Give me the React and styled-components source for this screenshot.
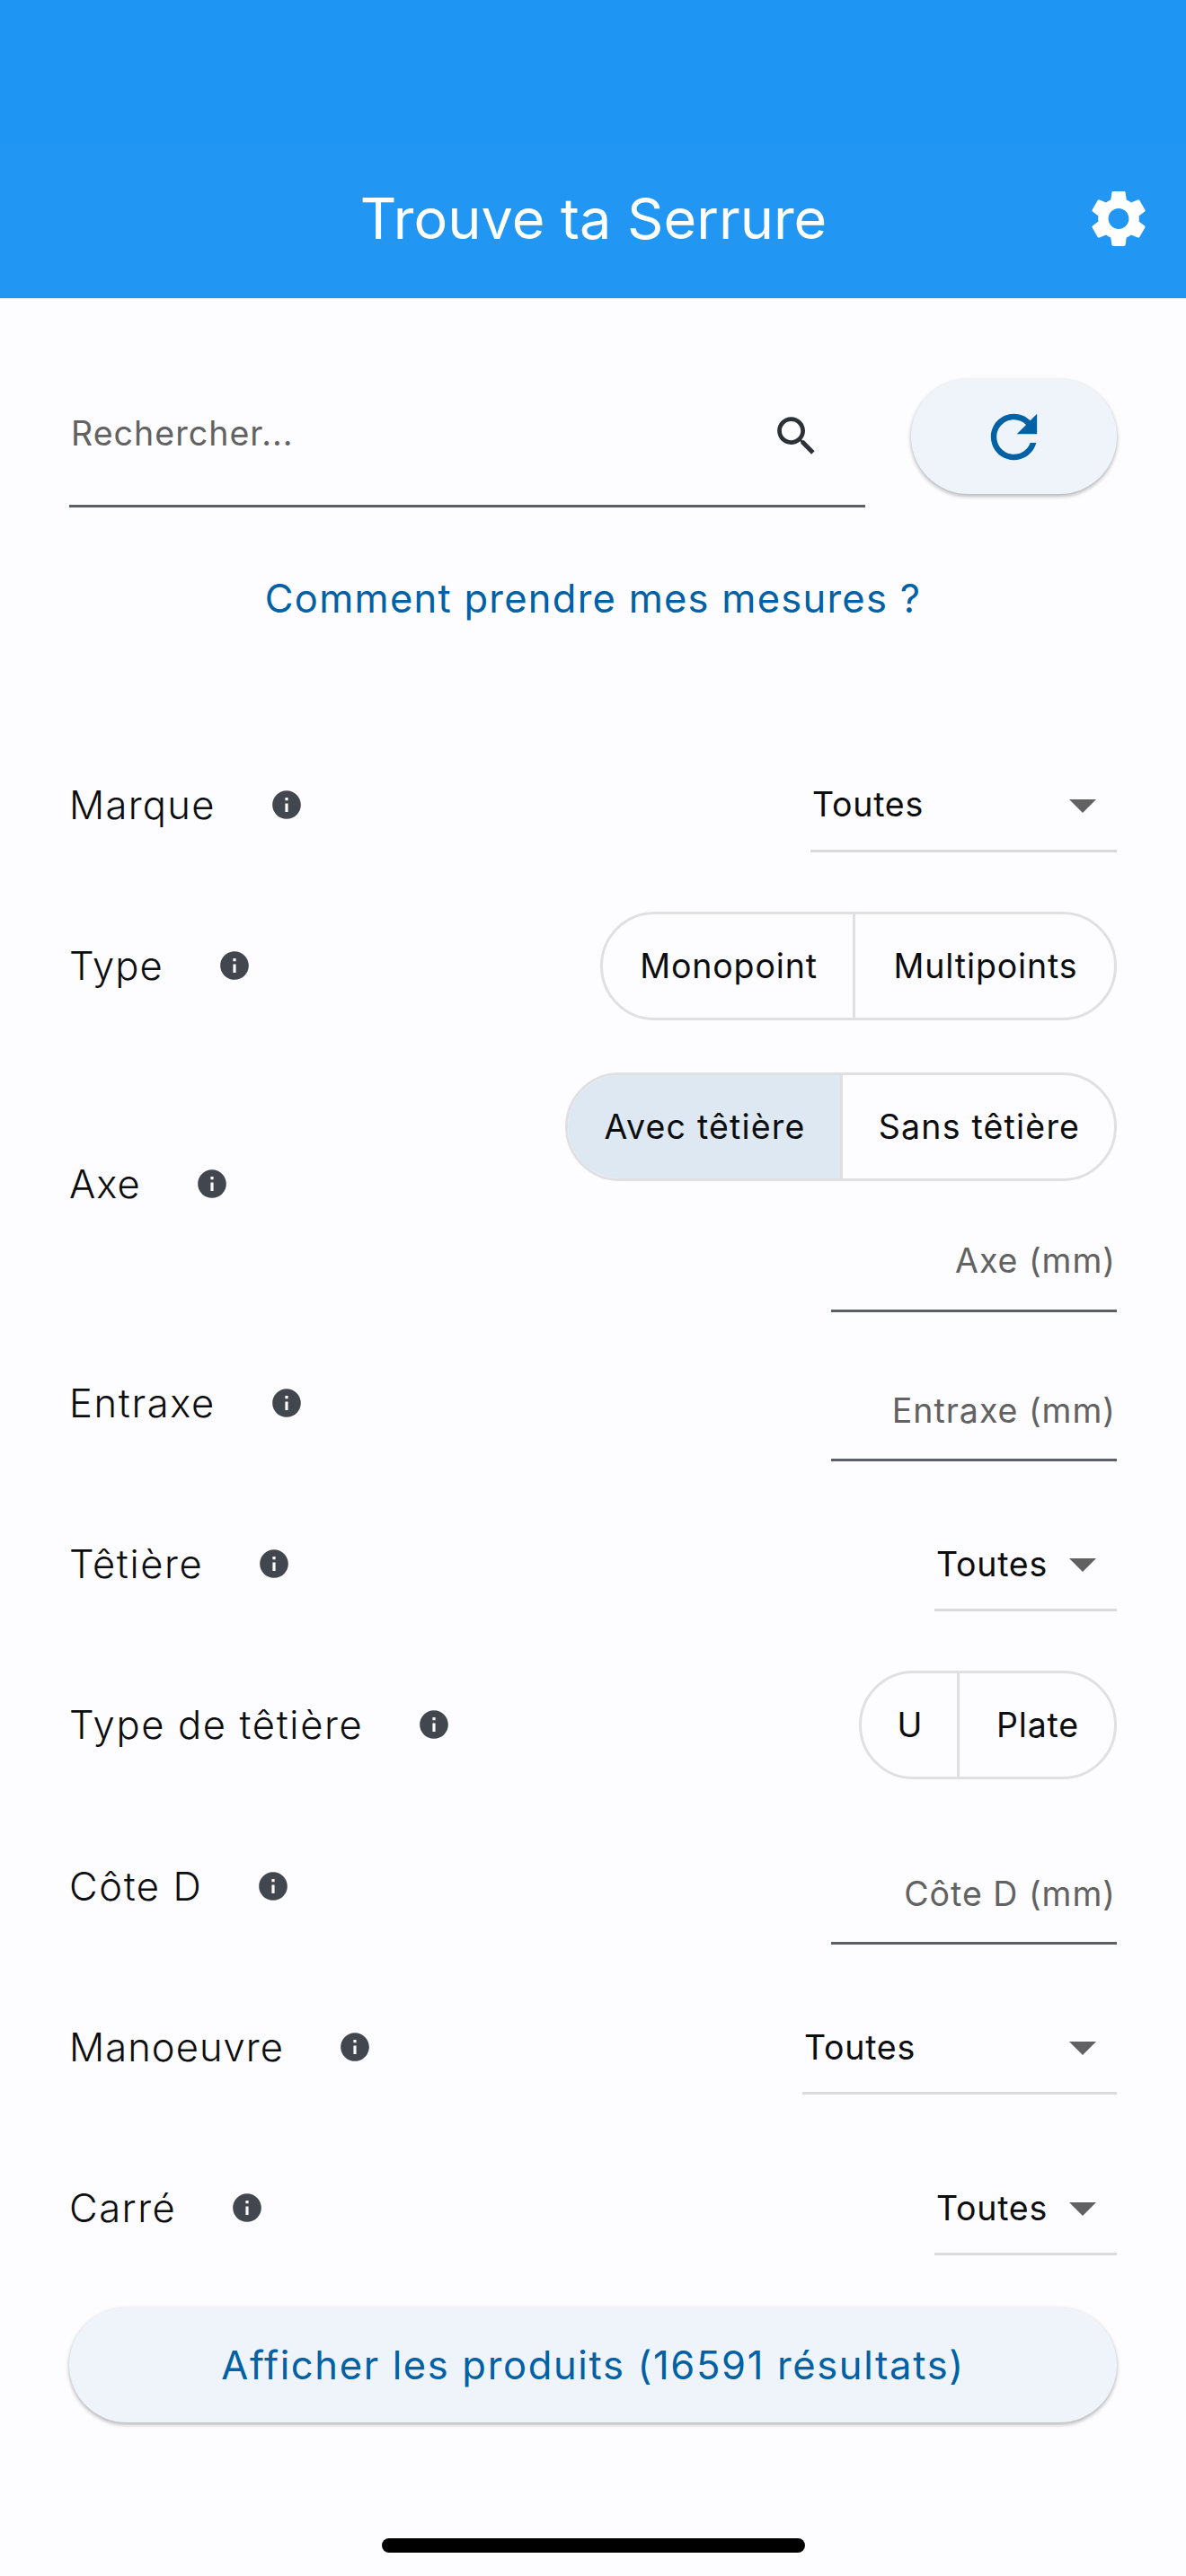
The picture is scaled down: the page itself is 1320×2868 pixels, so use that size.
import React from 'react';
import styled, { createGlobalStyle } from 'styled-components';

const GlobalStyle = createGlobalStyle`
    * {
        box-sizing: border-box;
    }

    body {
        margin: 0;
        background-color: #fdfcff;
        color: #1a1c1e;
        font-family: 'Inter', 'Liberation Sans', sans-serif;
    }

    button, input {
        font-family: inherit;
        margin: 0;
    }
`

const Screen = styled.div`
    width: 1320px;
    height: 2868px;
    display: flex;
    flex-direction: column;
    background-color: #fdfcff;
    overflow: hidden;
`

const StatusBar = styled.div`
    height: 160px;
    flex-shrink: 0;
    background-color: #1e95f2;
`

const Header = styled.header`
    height: 172px;
    flex-shrink: 0;
    padding: 0 37px 6px 113px;
    display: grid;
    grid-template-columns: 1fr 76px;
    align-items: center;
    background-color: #2196f3;
`

const HeaderTitle = styled.h1`
    margin: 0;
    padding-left: 1px;
    font-size: 63px;
    font-weight: 400;
    line-height: 80px;
    letter-spacing: 0;
    text-align: center;
    color: white;
`

const IconButton = styled.button`
    display: flex;
    padding: 0;
    border: none;
    background: none;
    color: ${props => props.$color};
`

const Content = styled.main`
    padding: 0 77px;
    display: flex;
    flex-direction: column;
`

const SearchRow = styled.div`
    margin-top: 76px;
    height: 157px;
    display: flex;
    justify-content: space-between;
`

const SearchField = styled.label`
    width: 886px;
    padding: 0 48px 6px 2px;
    display: flex;
    align-items: center;
    border-bottom: 3px solid #5a5f68;

    ${IconButton} {
        padding-top: 6px;
    }
`

const SearchInput = styled.input`
    flex: 1;
    min-width: 0;
    padding: 0;
    border: none;
    outline: none;
    background: none;
    font-size: 37.5px;
    letter-spacing: 1.05px;

    &::placeholder {
        color: #626262;
        opacity: 1;
    }
`

const RaisedButton = styled.button`
    height: 128px;
    padding: 0;
    display: flex;
    align-items: center;
    justify-content: center;
    border: none;
    border-radius: 64px;
    background-color: #eff4fb;
    color: #0061a4;
    box-shadow: 0 3px 4px rgba(0, 0, 0, 0.2), 0 1px 5px rgba(0, 0, 0, 0.12);
`

const RefreshButton = styled(RaisedButton)`
    width: 229px;
    margin-top: 14px;
`

const HelpLink = styled.button`
    height: 48px;
    margin: 77px 0 116px;
    padding: 0;
    border: none;
    background: none;
    font-size: 43.5px;
    line-height: 48px;
    letter-spacing: 1.25px;
    color: #0061a4;
`

const FilterRow = styled.div`
    height: ${props => props.$height || 179.35}px;
    display: flex;
    align-items: center;
    justify-content: space-between;
`

const FilterLabel = styled.div`
    display: flex;
    align-items: center;
    gap: 60px;
    font-size: 43.5px;
    font-weight: 300;
    letter-spacing: ${props => props.$tracking}px;
    color: #0c0d0f;
`

const Stack = styled.div`
    margin-top: 18px;
    display: flex;
    flex-direction: column;
    align-items: flex-end;
    gap: 15px;
`

const Dropdown = styled.div`
    width: ${props => props.$width}px;
    height: 106px;
    padding: 3px 2px 0 2px;
    display: flex;
    align-items: center;
    justify-content: space-between;
    border-bottom: 3px solid #dadadc;
    font-size: 37.5px;
    letter-spacing: 0.75px;
    color: #0c0d0f;

    ${IconButton} {
        margin-left: -12px;
    }
`

const Segments = styled.div`
    height: 121px;
    display: flex;
    border: 3px solid #e0e0e2;
    border-radius: 61px;
    overflow: hidden;
    letter-spacing: ${props => props.$tracking || 0.85}px;
`

const Segment = styled.button`
    width: ${props => props.$width}px;
    padding: 0 0 0 2px;
    border: none;
    background-color: ${props => props.$selected ? '#dde8f3' : 'transparent'};
    font-size: 37.5px;
    letter-spacing: inherit;
    color: #0c0d0f;

    & + & {
        border-left: 3px solid #e0e0e2;
    }
`

const NumberInput = styled.input`
    width: 318px;
    height: 120px;
    margin-top: 11px;
    padding: 9px 1px 0 0;
    border: none;
    border-bottom: 3px solid #5a5f68;
    outline: none;
    background: none;
    text-align: right;
    font-size: 37.5px;
    letter-spacing: 1px;

    &::placeholder {
        color: #626262;
        opacity: 1;
    }
`

const ResultsButton = styled(RaisedButton)`
    margin-top: 21px;
    font-size: 43.5px;
    letter-spacing: 1.65px;
`

const HomeIndicator = styled.div`
    width: 471px;
    height: 16px;
    margin: auto auto 26px;
    flex-shrink: 0;
    border-radius: 8px;
    background-color: black;
`

function Icon({ size, path }) {
    return (
        <svg width={size} height={size} viewBox="0 0 24 24" fill="currentColor">
            <path d={path} />
        </svg>
    )
}

const GEAR = 'M19.14 12.94c.04-.3.06-.61.06-.94 0-.32-.02-.64-.07-.94l2.03-1.58c.18-.14.23-.41.12-.61l-1.92-3.32c-.12-.22-.37-.29-.59-.22l-2.39.96c-.5-.38-1.03-.7-1.62-.94l-.36-2.54c-.04-.24-.24-.41-.48-.41h-3.84c-.24 0-.43.17-.47.41l-.36 2.54c-.59.24-1.13.57-1.62.94l-2.39-.96c-.22-.08-.47 0-.59.22L2.74 8.87c-.12.21-.08.47.12.61l2.03 1.58c-.05.3-.09.63-.09.94s.02.64.07.94l-2.03 1.58c-.18.14-.23.41-.12.61l1.92 3.32c.12.22.37.29.59.22l2.39-.96c.5.38 1.03.7 1.62.94l.36 2.54c.05.24.24.41.48.41h3.84c.24 0 .44-.17.47-.41l.36-2.54c.59-.24 1.13-.56 1.62-.94l2.39.96c.22.08.47 0 .59-.22l1.92-3.32c.12-.22.07-.47-.12-.61l-2.01-1.58zM12 15.6c-1.98 0-3.6-1.62-3.6-3.6s1.62-3.6 3.6-3.6 3.6 1.62 3.6 3.6-1.62 3.6-3.6 3.6z'
const SEARCH = 'M15.5 14h-.79l-.28-.27C15.41 12.59 16 11.11 16 9.5 16 5.91 13.09 3 9.5 3S3 5.91 3 9.5 5.91 16 9.5 16c1.61 0 3.09-.59 4.23-1.57l.27.28v.79l5 4.99L20.49 19l-4.99-5zm-6 0C7.01 14 5 11.99 5 9.5S7.01 5 9.5 5 14 7.01 14 9.5 11.99 14 9.5 14z'
const REFRESH = 'M17.65 6.35C16.2 4.9 14.21 4 12 4c-4.42 0-7.99 3.58-7.99 8s3.57 8 7.99 8c3.73 0 6.84-2.55 7.73-6h-2.08c-.82 2.33-3.04 4-5.65 4-3.31 0-6-2.69-6-6s2.69-6 6-6c1.66 0 3.14.69 4.22 1.78L13 11h7V4l-2.35 2.35z'
const INFO = 'M12 2C6.48 2 2 6.48 2 12s4.48 10 10 10 10-4.48 10-10S17.52 2 12 2zm1 15h-2v-6h2v6zm0-8h-2V7h2v2z'
const ARROW = 'M7 10l5 5 5-5z'

function Filter({ label, height, tracking = 1.5, children }) {
    return (
        <FilterRow $height={height}>
            <FilterLabel $tracking={tracking}>
                {label}
                <IconButton $color="#42474f">
                    <Icon size={38} path={INFO} />
                </IconButton>
            </FilterLabel>
            {children}
        </FilterRow>
    )
}

function Select({ width }) {
    return (
        <Dropdown $width={width}>
            Toutes
            <IconButton $color="#616161">
                <Icon size={72} path={ARROW} />
            </IconButton>
        </Dropdown>
    )
}

export default function App() {
    return (
        <Screen>
            <GlobalStyle />
            <StatusBar />
            <Header>
                <HeaderTitle>Trouve ta Serrure</HeaderTitle>
                <IconButton $color="white">
                    <Icon size={77} path={GEAR} />
                </IconButton>
            </Header>
            <Content>
                <SearchRow>
                    <SearchField>
                        <SearchInput placeholder="Rechercher..." />
                        <IconButton as="span" $color="#2c3138">
                            <Icon size={57} path={SEARCH} />
                        </IconButton>
                    </SearchField>
                    <RefreshButton>
                        <Icon size={77} path={REFRESH} />
                    </RefreshButton>
                </SearchRow>
                <HelpLink>Comment prendre mes mesures ?</HelpLink>
                <Filter label="Marque" tracking={1.3}>
                    <Select width={341} />
                </Filter>
                <Filter label="Type" tracking={1.1}>
                    <Segments>
                        <Segment $width={278}>Monopoint</Segment>
                        <Segment $width={291}>Multipoints</Segment>
                    </Segments>
                </Filter>
                <Filter label="Axe" height={307.3} tracking={1}>
                    <Stack>
                        <Segments $tracking={1.2}>
                            <Segment $width={303} $selected>Avec têtière</Segment>
                            <Segment $width={305}>Sans têtière</Segment>
                        </Segments>
                        <NumberInput placeholder="Axe (mm)" />
                    </Stack>
                </Filter>
                <Filter label="Entraxe" tracking={1.65}>
                    <NumberInput placeholder="Entraxe (mm)" />
                </Filter>
                <Filter label="Têtière" tracking={1.65}>
                    <Select width={203} />
                </Filter>
                <Filter label="Type de têtière" tracking={1.65}>
                    <Segments>
                        <Segment $width={106}>U</Segment>
                        <Segment $width={175}>Plate</Segment>
                    </Segments>
                </Filter>
                <Filter label="Côte D" tracking={1.6}>
                    <NumberInput placeholder="Côte D (mm)" />
                </Filter>
                <Filter label="Manoeuvre" tracking={1.05}>
                    <Select width={350} />
                </Filter>
                <Filter label="Carré">
                    <Select width={203} />
                </Filter>
                <ResultsButton>Afficher les produits (16591 résultats)</ResultsButton>
            </Content>
            <HomeIndicator />
        </Screen>
    )
}
